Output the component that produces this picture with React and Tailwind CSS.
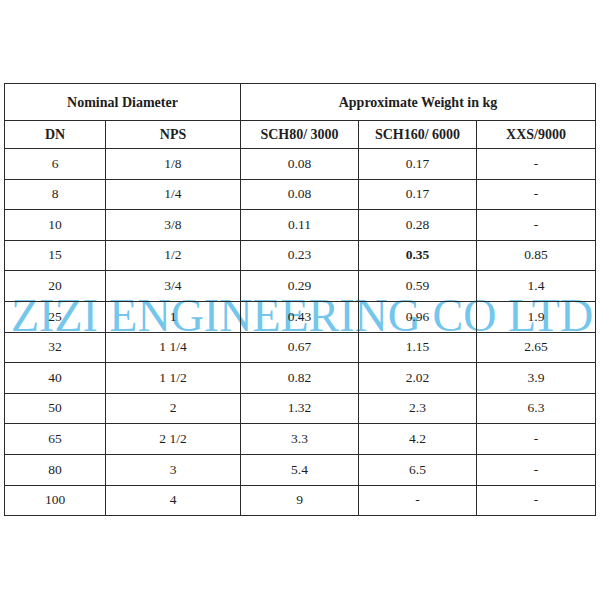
const rows = [
  ['6', '1/8', '0.08', '0.17', '-'],
  ['8', '1/4', '0.08', '0.17', '-'],
  ['10', '3/8', '0.11', '0.28', '-'],
  ['15', '1/2', '0.23', '0.35', '0.85'],
  ['20', '3/4', '0.29', '0.59', '1.4'],
  ['25', '1', '0.43', '0.96', '1.9'],
  ['32', '1 1/4', '0.67', '1.15', '2.65'],
  ['40', '1 1/2', '0.82', '2.02', '3.9'],
  ['50', '2', '1.32', '2.3', '6.3'],
  ['65', '2 1/2', '3.3', '4.2', '-'],
  ['80', '3', '5.4', '6.5', '-'],
  ['100', '4', '9', '-', '-'],
];

const cell = 'border border-[#2a2a2a] text-center align-middle p-0';

export default function App() {
  return (
    <div className="w-[600px] h-[600px] bg-white relative overflow-hidden font-['Liberation_Serif','Times_New_Roman',serif] text-[#1e1e1e] text-[13.5px]">
      {/* watermark, sits behind the table */}
      <div className="absolute left-[11px] top-[290px] text-[46px] leading-[52px] whitespace-nowrap text-[#74c6ec] pointer-events-none">
        ZIZI ENGINEERING CO LTD
      </div>

      <div className="relative pt-[83px] pl-[4px]">
        <table className="border-collapse table-fixed w-[591px]">
          <colgroup>
            <col className="w-[101px]" />
            <col className="w-[135px]" />
            <col className="w-[118px]" />
            <col className="w-[118px]" />
            <col className="w-[119px]" />
          </colgroup>
          <thead>
            <tr className="h-[37px] font-bold text-[14px]">
              <th colSpan={2} className={cell}>Nominal Diameter</th>
              <th colSpan={3} className={cell}>Approximate Weight in kg</th>
            </tr>
            <tr className="h-[28px] font-bold text-[14px]">
              <th className={cell}>DN</th>
              <th className={cell}>NPS</th>
              <th className={cell}>SCH80/ 3000</th>
              <th className={cell}>SCH160/ 6000</th>
              <th className={cell}>XXS/9000</th>
            </tr>
          </thead>
          <tbody>
            {rows.map((r, i) => (
              <tr key={i} className="h-[30.6px]">
                {r.map((v, j) => (
                  <td key={j} className={`${cell} ${i === 3 && j === 3 ? 'font-bold' : ''}`}>
                    {v}
                  </td>
                ))}
              </tr>
            ))}
          </tbody>
        </table>
      </div>
    </div>
  );
}
